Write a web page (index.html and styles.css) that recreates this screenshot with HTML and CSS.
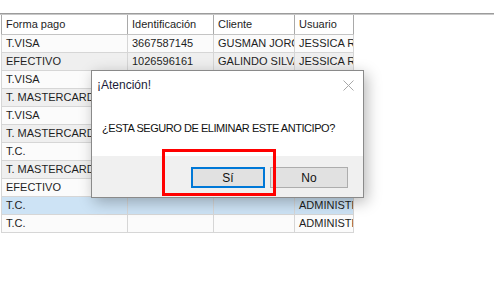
FILE: index.html
```html
<!DOCTYPE html>
<html lang="es">
<head>
  <meta charset="UTF-8" />
  <title>Anticipos</title>
  <link rel="stylesheet" href="styles.css">
</head>
<body>

  <!-- Grid line above the table -->
  <div class="top-line"></div>

  <!-- Anticipos grid -->
  <table class="grid">
    <colgroup>
      <col class="col-forma">
      <col class="col-id">
      <col class="col-cliente">
      <col class="col-usuario">
    </colgroup>
    <thead>
      <tr>
        <th>Forma pago</th>
        <th>Identificación</th>
        <th>Cliente</th>
        <th>Usuario</th>
      </tr>
    </thead>
    <tbody>
      <tr><td>T.VISA</td><td>3667587145</td><td>GUSMAN JORGE</td><td>JESSICA R</td></tr>
      <tr><td>EFECTIVO</td><td>1026596161</td><td>GALINDO SILVA</td><td>JESSICA R</td></tr>
      <tr><td>T.VISA</td><td></td><td></td><td></td></tr>
      <tr><td>T. MASTERCARD</td><td></td><td></td><td></td></tr>
      <tr><td>T.VISA</td><td></td><td></td><td></td></tr>
      <tr><td>T. MASTERCARD</td><td></td><td></td><td></td></tr>
      <tr><td>T.C.</td><td></td><td></td><td></td></tr>
      <tr><td>T. MASTERCARD</td><td></td><td></td><td></td></tr>
      <tr><td>EFECTIVO</td><td></td><td></td><td></td></tr>
      <tr class="selected"><td>T.C.</td><td></td><td></td><td>ADMINISTRADOR</td></tr>
      <tr><td>T.C.</td><td></td><td></td><td>ADMINISTRADOR</td></tr>
    </tbody>
  </table>

  <!-- Confirm dialog -->
  <div class="dialog">
    <div class="dialog-title">
      <span>¡Atención!</span>
      <svg class="close" width="11" height="11" viewBox="0 0 11 11">
        <path d="M0.5 0.5 L10.5 10.5 M10.5 0.5 L0.5 10.5" stroke="#a8a8a8" stroke-width="1" fill="none"/>
      </svg>
    </div>
    <div class="dialog-body">¿ESTA SEGURO DE ELIMINAR ESTE ANTICIPO?</div>
    <div class="dialog-footer">
      <button class="btn btn-si">Sí</button>
      <button class="btn btn-no">No</button>
    </div>
  </div>

  <!-- Red highlight -->
  <div class="highlight"></div>

</body>
</html>
```

FILE: styles.css
```css
/* Reset & General */
body, html {
  margin: 0;
  padding: 0;
  background: #fff;
  font-family: "Liberation Sans", Arial, sans-serif;
  color: #1e1e1e;
}

body {
  position: relative;
  width: 494px;
  height: 281px;
  overflow: hidden;
  padding-top: 13px;
  box-sizing: border-box;
}

.top-line {
  height: 0;
  border-top: 1px solid #9c9c9c;
  border-bottom: 1px solid #c8c8c8;
}

/* Grid */
.grid {
  margin-left: 1px;
  border-collapse: collapse;
  table-layout: fixed;
  width: 352px;
  font-size: 11px;
}

.col-forma { width: 126px; }
.col-id { width: 86px; }
.col-cliente { width: 81px; }
.col-usuario { width: 59px; }

.grid th,
.grid td {
  height: 17px;
  padding: 0 0 0 4px;
  text-align: left;
  white-space: nowrap;
  overflow: hidden;
  font-weight: normal;
  border: 1px solid #d6d6d6;
  border-top: none;
  line-height: 17px;
}

.grid th {
  height: 19px;
  background: #fff;
  border-left: 1px solid #a9a9a9;
  border-right: 1px solid #a9a9a9;
  border-bottom: 1px solid #c4c4c4;
}

.grid tbody tr:nth-child(odd) td {
  background: #fbfbfb;
}
.grid tbody tr:nth-child(even) td {
  background: #efefef;
}
.grid tbody tr.selected td {
  background: #cde3f5;
}

/* Dialog */
.dialog {
  position: absolute;
  left: 91px;
  top: 70px;
  width: 273px;
  height: 128px;
  box-sizing: border-box;
  background: #fff;
  border: 1px solid #8a8a8a;
  box-shadow: 3px 4px 14px rgba(0, 0, 0, 0.28);
  display: flex;
  flex-direction: column;
}

.dialog-title {
  height: 28px;
  padding: 0 9px 0 5px;
  display: flex;
  align-items: center;
  justify-content: space-between;
  font-size: 12px;
  color: #1c1c3a;
}

.dialog-body {
  height: 57px;
  box-sizing: border-box;
  padding: 22px 0 0 10px;
  font-size: 11px;
  letter-spacing: -0.45px;
  line-height: 14px;
  color: #111;
}

.dialog-footer {
  flex: 1;
  background: #f0f0f0;
  display: flex;
  justify-content: flex-end;
  align-items: flex-start;
  gap: 5px;
  padding: 11px 15px 0 0;
}

.btn {
  height: 21px;
  padding: 0;
  margin: 0;
  background: #e1e1e1;
  border: 1px solid #adadad;
  font-family: "Liberation Sans", Arial, sans-serif;
  font-size: 12px;
  color: #111;
}

.btn-si {
  width: 74px;
  border: 2px solid #0078d7;
}

.btn-no {
  width: 78px;
}

/* Red annotation box */
.highlight {
  position: absolute;
  left: 162px;
  top: 149px;
  width: 114px;
  height: 47px;
  box-sizing: border-box;
  border: 3px solid #ff0000;
}
```
